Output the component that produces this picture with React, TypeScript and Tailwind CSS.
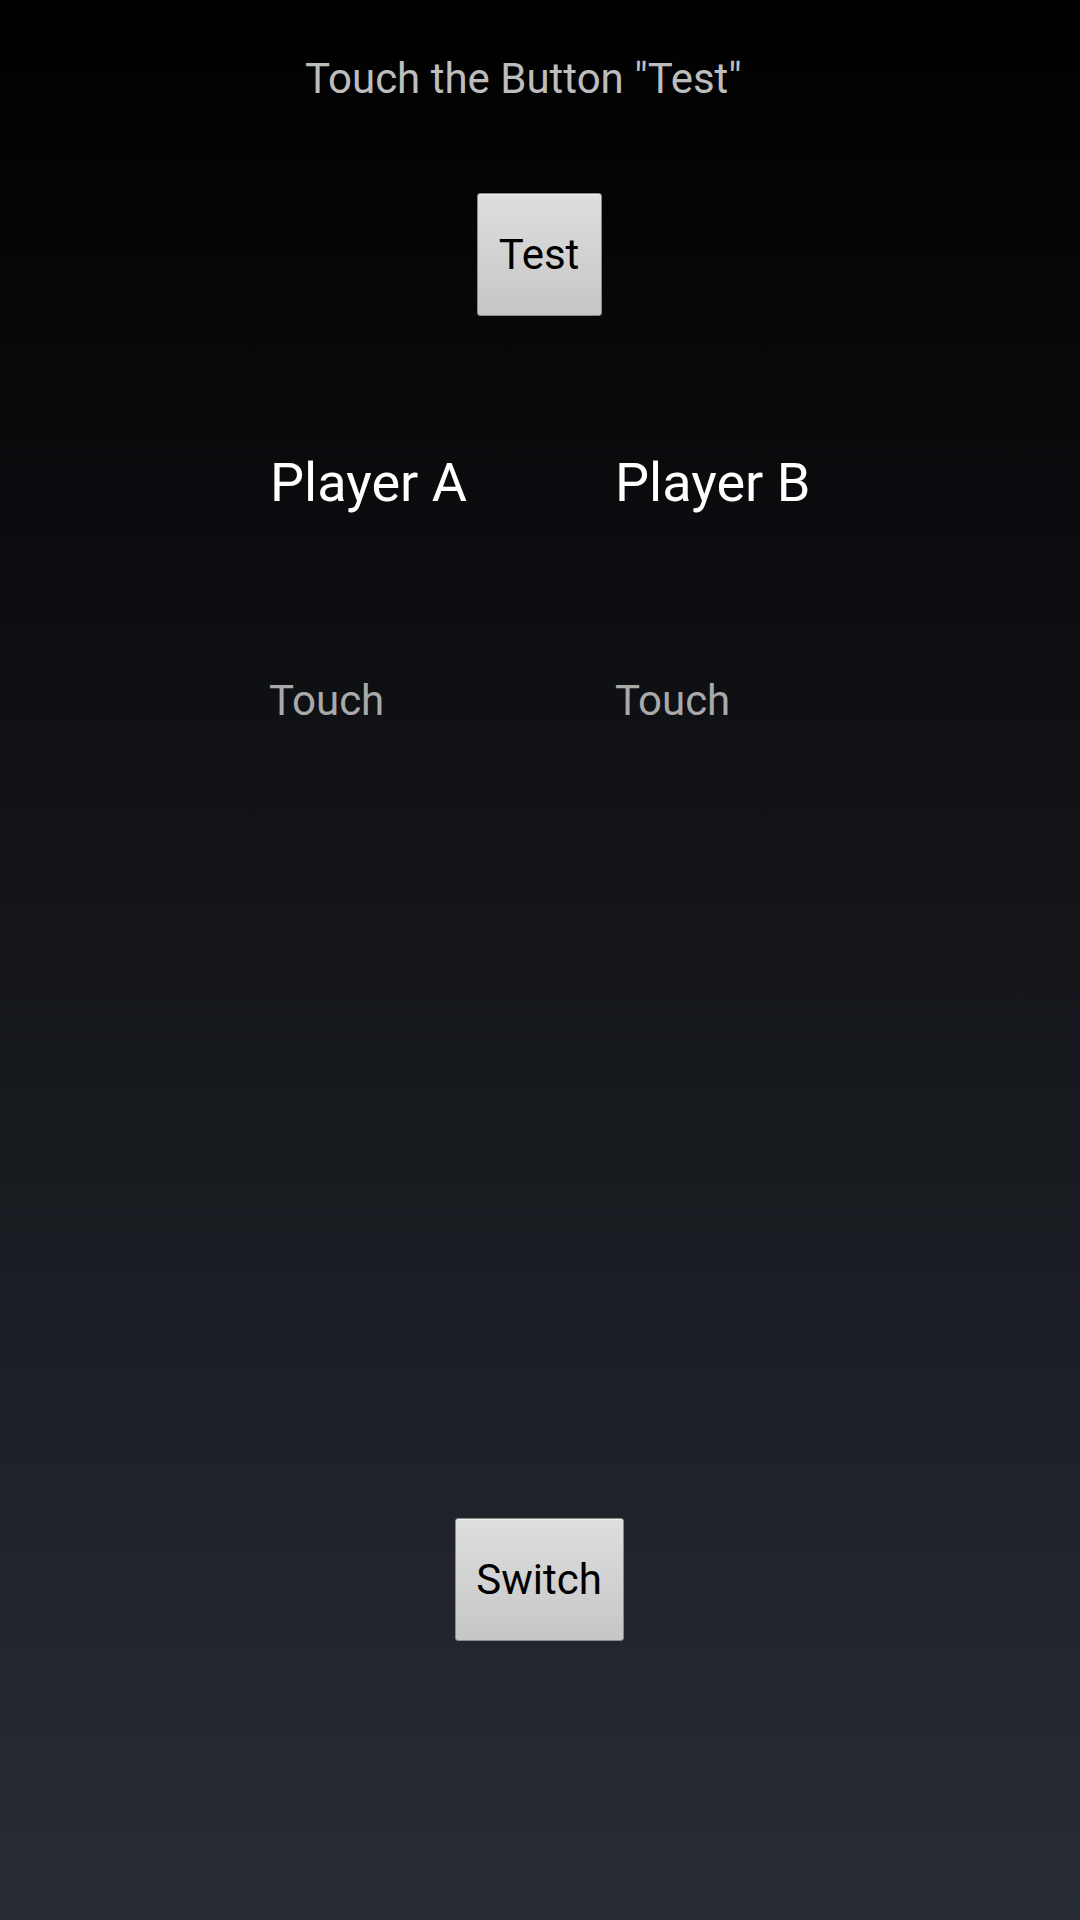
import React from "react";

function HoloButton({ label, width }: { label: string; width: string }) {
  return (
    <button
      className={`${width} h-[123px] self-center flex items-center justify-center rounded-[3px] border border-[#8a8a8a] bg-[linear-gradient(to_bottom,#dedede,#c6c6c6)] text-black text-[42px] leading-[50px] shadow-[inset_0_1px_0_#ececec]`}
      style={{ fontFamily: "Roboto, 'Noto Sans', sans-serif" }}
    >
      {label}
    </button>
  );
}

export default function App() {
  return (
    <div
      className="w-[1080px] min-h-[1920px] flex flex-col bg-[linear-gradient(to_bottom,#000000,#282c35)]"
      style={{ fontFamily: "Roboto, 'Noto Sans', sans-serif" }}
    >
      <div className="mt-[54px] pl-[305px] text-[42px] leading-[50px] text-[#bdbdbd] whitespace-nowrap">
        Touch the Button "Test"
      </div>

      <div className="mt-[89px] flex justify-center">
        <div className="-translate-x-[1px] flex">
          <HoloButton label="Test" width="w-[125px]" />
        </div>
      </div>

      <div className="mt-[135px] pl-[270px] grid grid-cols-[345px_345px] text-[54px] leading-[64px] text-white">
        <div>Player A</div>
        <div>Player B</div>
      </div>

      <div className="mt-[161px] pl-[269px] grid grid-cols-[346px_346px] text-[42px] leading-[50px] text-[#a9a9a9]">
        <div>Touch</div>
        <div>Touch</div>
      </div>

      <div className="mt-[792px] flex justify-center">
        <div className="-translate-x-[1px] flex">
          <HoloButton label="Switch" width="w-[169px]" />
        </div>
      </div>
    </div>
  );
}
